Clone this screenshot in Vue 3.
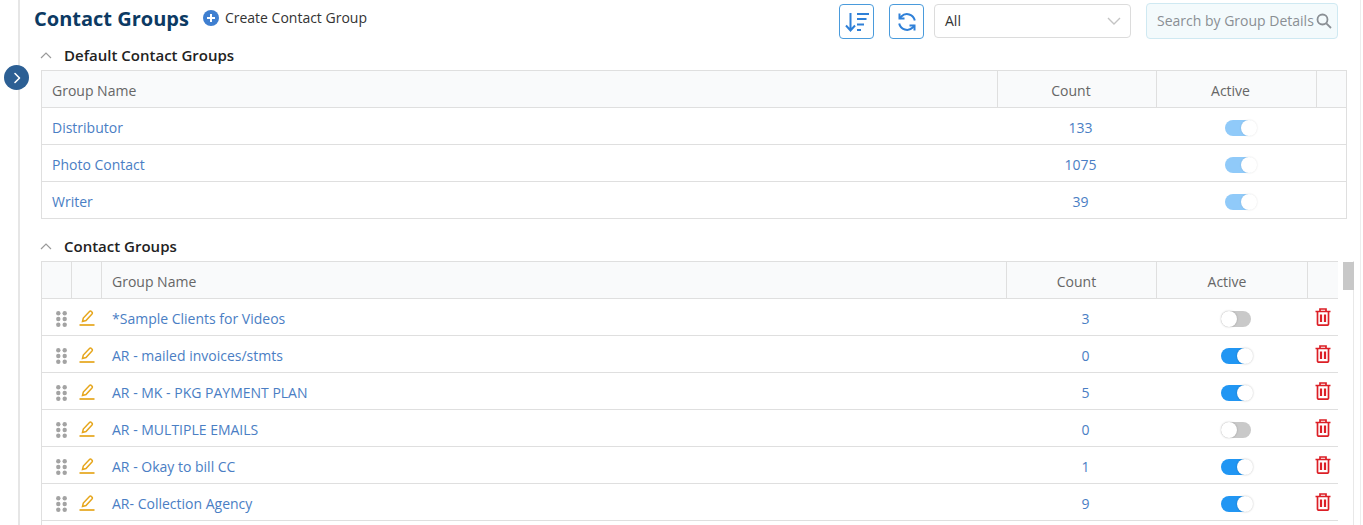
<script setup>
const defaults = [
  { name: 'Distributor', count: 133 },
  { name: 'Photo Contact', count: 1075 },
  { name: 'Writer', count: 39 },
]
const groups = [
  { name: '*Sample Clients for Videos', count: 3, on: false },
  { name: 'AR - mailed invoices/stmts', count: 0, on: true },
  { name: 'AR - MK - PKG PAYMENT PLAN', count: 5, on: true },
  { name: 'AR - MULTIPLE EMAILS', count: 0, on: false },
  { name: 'AR - Okay to bill CC', count: 1, on: true },
  { name: 'AR- Collection Agency', count: 9, on: true },
]
</script>

<template>
  <div class="page">
    <button class="expand" aria-label="Expand">
      <svg width="10" height="12" viewBox="0 0 10 12"><path d="M3 1.500 7.500 6 3 10.500" fill="none" stroke="#fff" stroke-width="1.600" stroke-linecap="round" stroke-linejoin="round"/></svg>
    </button>
    <main class="main">
      <header class="top">
        <h1 class="title">Contact Groups</h1>
        <div class="create">
          <svg width="16" height="16" viewBox="0 0 16 16"><circle cx="8" cy="8" r="8" fill="#3f7fd0"/><path d="M8 4v8M4 8h8" stroke="#fff" stroke-width="2"/></svg>
          <span>Create Contact Group</span>
        </div>
        <div class="tools">
          <button class="tool sort" aria-label="Sort">
            <svg width="26" height="24" viewBox="0 0 26 24" fill="none" stroke="#2f80d8" stroke-width="2"><path d="M6.500 3v17M2 15.500l4.500 5 4.500-5"/><path d="M13 4h12M13 9h9.500M13 14.500h7M13 20h4"/></svg>
          </button>
          <button class="tool refresh" aria-label="Refresh">
            <svg width="20" height="20" viewBox="0 0 20 20" fill="none" stroke="#2f80d8" stroke-width="2"><path d="M17.800 8.500A8 8 0 0 0 4.300 4.500L2.500 6.500"/><path d="M2.200 11.500A8 8 0 0 0 15.700 15.500L17.500 13.500"/><path d="M2.500 1.500V6.500H7.500"/><path d="M17.500 18.500V13.500H12.500"/></svg>
          </button>
          <div class="select">
            <span class="lift">All</span>
            <svg width="14" height="8" viewBox="0 0 14 8"><path d="M1 1l6 6 6-6" fill="none" stroke="#c4c4c4" stroke-width="1.400"/></svg>
          </div>
          <div class="search">
            <span class="lift">Search by Group Details</span>
            <svg width="16" height="16" viewBox="0 0 16 16" fill="none" stroke="#8a8f94" stroke-width="1.800"><circle cx="6.500" cy="6.500" r="5"/><path d="M10.300 10.300 15 15"/></svg>
          </div>
        </div>
      </header>

      <section class="sec first">
        <div class="sec-head">
          <svg width="12" height="7" viewBox="0 0 12 7"><path d="M1 6l5-5 5 5" fill="none" stroke="#9a9a9a" stroke-width="1.200"/></svg>
          <h2>Default Contact Groups</h2>
        </div>
        <div class="table t1">
          <div class="row head">
            <div class="cell name">Group Name</div>
            <div class="cell center">Count</div>
            <div class="cell center act">Active</div>
            <div class="cell"></div>
          </div>
          <div v-for="d in defaults" :key="d.name" class="row">
            <div class="cell name link">{{ d.name }}</div>
            <div class="cell center link val">{{ d.count }}</div>
            <div class="cell center tog"><span class="toggle on dim"></span></div>
            <div class="cell"></div>
          </div>
        </div>
      </section>

      <section class="sec second">
        <div class="sec-head">
          <svg width="12" height="7" viewBox="0 0 12 7"><path d="M1 6l5-5 5 5" fill="none" stroke="#9a9a9a" stroke-width="1.200"/></svg>
          <h2>Contact Groups</h2>
        </div>
        <div class="scroller">
          <div class="table t2">
            <div class="row head">
              <div class="cell"></div>
              <div class="cell"></div>
              <div class="cell name">Group Name</div>
              <div class="cell center">Count</div>
              <div class="cell center">Active</div>
              <div class="cell"></div>
            </div>
            <div v-for="g in groups" :key="g.name" class="row">
              <div class="cell icon drag">
                <svg width="11" height="16" viewBox="0 0 11 16" fill="#a3a3a3"><circle cx="2.300" cy="2.300" r="2.200"/><circle cx="8.700" cy="2.300" r="2.200"/><circle cx="2.300" cy="8" r="2.200"/><circle cx="8.700" cy="8" r="2.200"/><circle cx="2.300" cy="13.700" r="2.200"/><circle cx="8.700" cy="13.700" r="2.200"/></svg>
              </div>
              <div class="cell icon">
                <svg width="16" height="16" viewBox="0 0 16 16" fill="none" stroke="#e6a61c" stroke-width="1.500"><path d="M3.500 11.500 4.300 8 10.500 1.500a1.300 1.300 0 0 1 1.900 0l.6.6a1.300 1.300 0 0 1 0 1.900L7 10.500z"/><path d="M.5 15h15" stroke-width="1.700"/></svg>
              </div>
              <div class="cell name link">{{ g.name }}</div>
              <div class="cell center link val">{{ g.count }}</div>
              <div class="cell center tog"><span class="toggle" :class="{ on: g.on }"></span></div>
              <div class="cell icon trash">
                <svg width="16" height="18" viewBox="0 0 16 18" fill="none" stroke="#dc1f26" stroke-width="1.700"><path d="M.5 3.500h15M5 3V1h6v2"/><path d="M2.500 3.500V16a1.200 1.200 0 0 0 1.200 1.200h8.600a1.200 1.200 0 0 0 1.200-1.200V3.500"/><path d="M6 6.500v7.500M10 6.500v7.500" stroke-width="2.200"/></svg>
              </div>
            </div>
          </div>
          <div class="track"><div class="thumb"></div></div>
        </div>
      </section>
    </main>
  </div>
</template>

<style>
html, body { margin: 0; height: 100%; overflow: hidden; background: #fff; }
</style>

<style scoped>
* { box-sizing: border-box; }
.page {
  position: relative;
  height: 525px;
  overflow: hidden;
  padding-left: 18px;
  font-family: "Open Sans", "Liberation Sans", sans-serif;
  font-size: 14px;
  color: #333;
  background: #fff;
}
.expand {
  position: absolute;
  left: 4px;
  top: 65px;
  width: 25px;
  height: 25px;
  padding: 0;
  border: 0;
  border-radius: 50%;
  background: #2c5f94;
  display: flex;
  align-items: center;
  justify-content: center;
}
.main {
  height: 525px;
  width: 1343px;
  border-left: 2px solid #e6e6e6;
  border-right: 1px solid #ededed;
  padding-left: 14px;
}
.top {
  display: flex;
  align-items: flex-start;
  height: 43px;
}
.title {
  margin: 4px 0 0;
  font-size: 20px;
  line-height: 29px;
  font-weight: 700;
  color: #0c3a63;
}
.create {
  display: flex;
  align-items: center;
  gap: 6px;
  margin: 8px 0 0 14px;
  height: 20px;
  line-height: 20px;
  color: #333;
}
.tools {
  margin-left: auto;
  margin-right: 22px;
  display: flex;
  align-items: flex-start;
  padding-top: 3px;
}
.tool {
  width: 35px;
  height: 35px;
  margin-top: 1px;
  padding: 0;
  border: 1px solid #4a9bdc;
  border-radius: 4px;
  background: #fff;
  display: flex;
  align-items: center;
  justify-content: center;
}
.sort { margin-right: 15px; }
.refresh { margin-right: 10px; }
.lift { margin-bottom: 2px; }
.select {
  width: 197px;
  height: 34px;
  margin-top: 1px;
  margin-right: 15px;
  padding: 0 9px 0 10px;
  border: 1px solid #dcdcdc;
  border-radius: 4px;
  display: flex;
  align-items: center;
  justify-content: space-between;
  color: #333;
}
.search {
  width: 192px;
  height: 36px;
  padding: 0 5px 0 10px;
  border: 1px solid #cfe9f2;
  border-radius: 4px;
  background: #f3fafc;
  display: flex;
  align-items: center;
  justify-content: space-between;
  color: #8a8f94;
  white-space: nowrap;
}
.sec-head {
  display: flex;
  align-items: center;
  height: 27px;
  padding: 0 0 2px 6px;
}
.sec-head h2 {
  margin: 0 0 0 12px;
  font-size: 15px;
  line-height: 23px;
  font-weight: 600;
  color: #222;
}
.second { margin-top: 15px; }
.table {
  border: solid #dfdfdf;
  border-width: 1px 1px 0 1px;
}
.t1 { width: 1306px; margin-left: 7px; }
.t1 .row { grid-template-columns: 956px 159px 160px 1fr; }
.t1 .head .center { padding-right: 12px; }
.t1 .head .act { padding-right: 12px; }
.t1 .val { padding-left: 6px; }
.t1 .tog { padding-left: 5px; }
.scroller {
  display: flex;
  margin-left: 7px;
}
.t2 { width: 1297px; border-right: 0; }
.t2 .row { grid-template-columns: 30px 30px 905px 150px 151px 1fr; }
.t2 .head .center { padding-right: 10px; }
.t2 .val { padding-left: 7px; }
.t2 .tog { padding-left: 6px; }
.row {
  display: grid;
  height: 37px;
  border-bottom: 1px solid #dfdfdf;
  align-items: stretch;
}
.cell {
  display: flex;
  align-items: center;
  line-height: 20px;
  min-width: 0;
  padding-top: 4px;
}
.cell.name { padding-left: 10px; }
.cell.center { justify-content: center; }
.cell.icon { justify-content: center; padding-top: 1px; }
.cell.drag { padding-left: 8px; padding-top: 4px; }
.cell.trash { padding-top: 0; }
.head { background: #f9fafb; color: #666; }
.head .cell { border-right: 1px solid #dfdfdf; }
.head .cell:last-child { border-right: 0; }
.link { color: #4a7ec4; }
.track {
  width: 16px;
  padding: 1px 0 0 5px;
  height: 264px;
  border-right: 1px solid #e8e8e8;
}
.thumb {
  width: 11px;
  height: 28px;
  background: #c8c8c8;
}
.toggle {
  position: relative;
  display: inline-block;
  width: 30px;
  height: 16px;
  border-radius: 8px;
  background: #c9c9c9;
}
.toggle::after {
  content: "";
  position: absolute;
  top: 0;
  left: 0;
  width: 16px;
  height: 16px;
  border-radius: 50%;
  background: #fff;
  box-shadow: 0 0 2px rgba(0, 0, 0, .25);
}
.toggle.on { background: #2196f3; }
.toggle.on::after { left: 16px; }
.toggle.dim { background: #90caf9; }
.toggle.dim::after { box-shadow: 0 0 2px rgba(0, 0, 0, .12); }
</style>
